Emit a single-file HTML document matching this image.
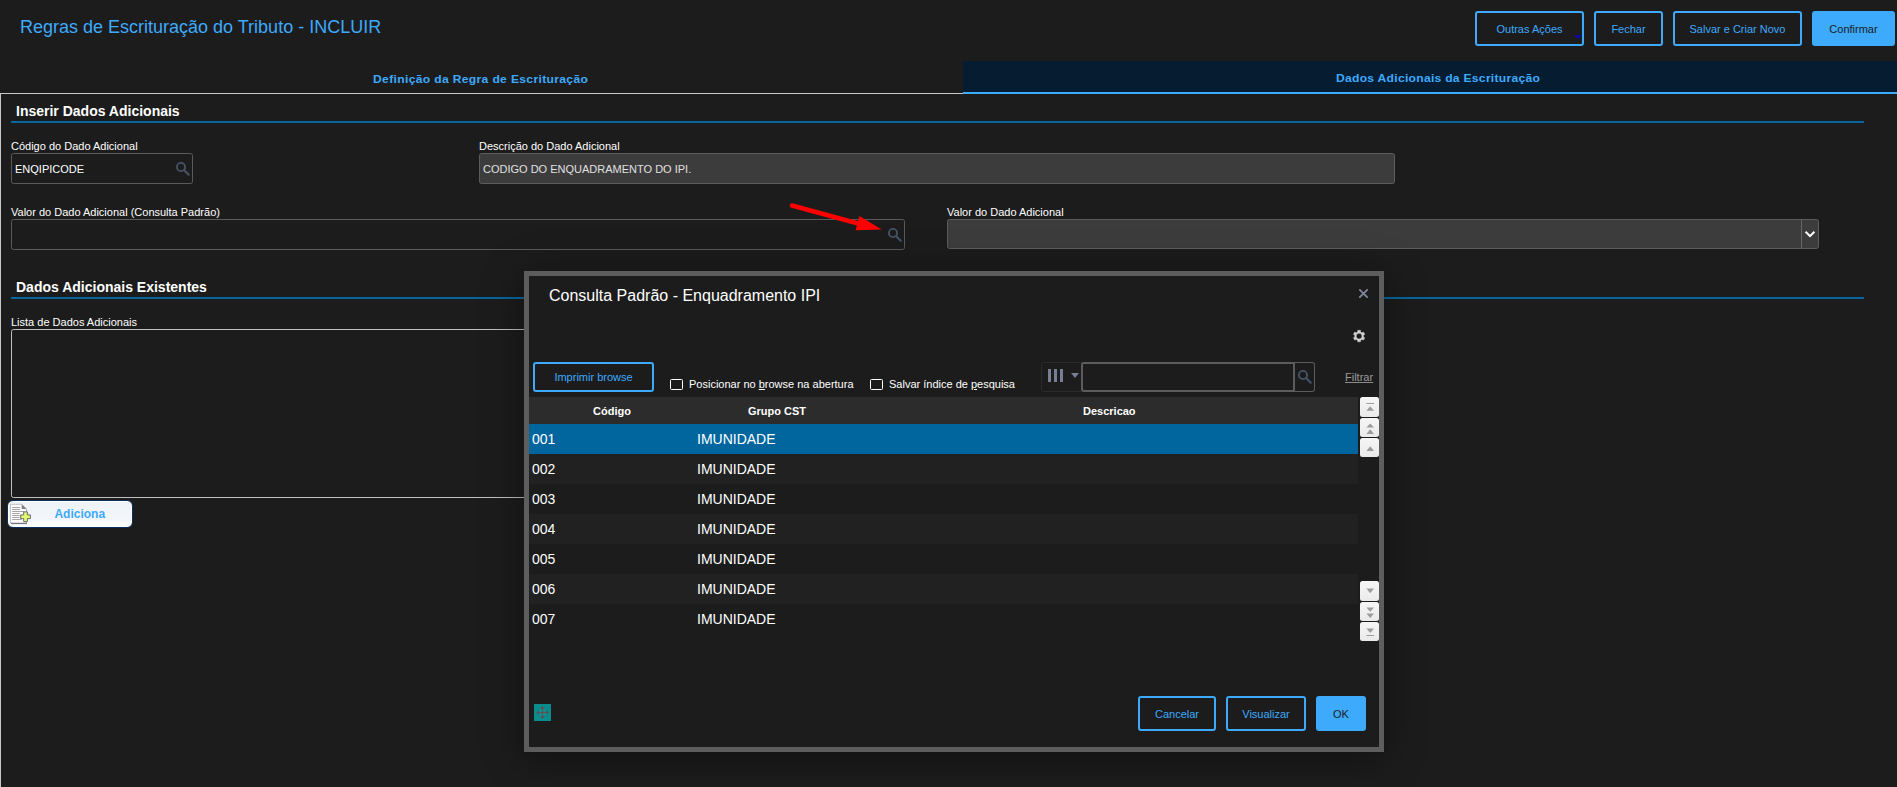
<!DOCTYPE html>
<html>
<head>
<meta charset="utf-8">
<style>
*{box-sizing:border-box;margin:0;padding:0}
html,body{width:1897px;height:787px;overflow:hidden;background:#1c1c1c}
body{font-family:"Liberation Sans",sans-serif;color:#fff;position:relative}
.abs{position:absolute}
.t{position:absolute;white-space:nowrap;line-height:1}
.btn{position:absolute;border:2px solid #3daafc;border-radius:3px;color:#3daafc;font-size:11px;display:flex;align-items:center;justify-content:center;white-space:nowrap;background:#1c1c1c}
.btn.fill{background:#3daafc;color:#1c1c1c;border-color:#3daafc}
.lbl{position:absolute;font-size:11px;color:#fff;white-space:nowrap;line-height:13px}
.inp{position:absolute;border:1px solid #5a5a5a;border-radius:2.5px;background:#1c1c1c;font-size:11px;color:#fff;line-height:13px;white-space:nowrap}
.inp.dis{background:#3c3c3c;border-color:#5d5d5d;color:#e0e0e0}
.sec{position:absolute;font-weight:bold;font-size:14px;color:#fff;white-space:nowrap;line-height:16px}
.hr{position:absolute;height:2px;background:#04689f}
.row{position:absolute;left:529px;width:829px;height:30px;font-size:14px;color:#fff;line-height:30px}
.row span{position:absolute;top:0;white-space:nowrap}
.row .c1{left:3px}
.row .c2{left:168px}
.sb{position:absolute;left:1360px;width:19px;background:linear-gradient(#f6f6f6,#eaeaea);border-radius:2.5px}
</style>
</head>
<body>
<!-- title -->
<div class="t" id="title" style="left:20px;top:18px;font-size:18px;color:#3daafc">Regras de Escrituração do Tributo - INCLUIR</div>

<!-- top buttons -->
<div class="btn" style="left:1475px;top:11px;width:109px;height:35px">Outras Ações</div>
<div class="abs" style="left:1574px;top:35px;width:0;height:0;border-left:4px solid transparent;border-right:4px solid transparent;border-top:4px solid #0a0aa8"></div>
<div class="btn" style="left:1594px;top:11px;width:69px;height:35px">Fechar</div>
<div class="btn" style="left:1673px;top:11px;width:129px;height:35px">Salvar e Criar Novo</div>
<div class="btn fill" style="left:1812px;top:11px;width:83px;height:35px">Confirmar</div>

<!-- tabs -->
<div class="abs" style="left:0;top:93px;width:963px;height:1px;background:#c8c8c8"></div>
<div class="abs" style="left:0;top:93px;width:1px;height:694px;background:#c6c6c6"></div>
<div class="abs" style="left:963px;top:61px;width:934px;height:33px;background:#061c30;border-bottom:2px solid #3daafc"></div>
<div class="t" id="tab1" style="left:373px;top:74px;font-size:11px;font-weight:bold;color:#3daafc;letter-spacing:0.307px;transform:scaleX(1.1);transform-origin:0 0">Definição da Regra de Escrituração</div>
<div class="t" id="tab2" style="left:1336px;top:73px;font-size:11px;font-weight:bold;color:#3daafc;letter-spacing:0.254px;transform:scaleX(1.1);transform-origin:0 0">Dados Adicionais da Escrituração</div>

<!-- section 1 -->
<div class="sec" id="sec1" style="left:16px;top:103px">Inserir Dados Adicionais</div>
<div class="hr" style="left:11px;top:121px;width:1853px"></div>

<div class="lbl" style="left:11px;top:140px">Código do Dado Adicional</div>
<div class="inp" style="left:11px;top:153px;width:182px;height:31px;padding:9px 0 0 3px">ENQIPICODE</div>
<svg class="abs" style="left:172.8px;top:158.8px" width="20" height="20" viewBox="0 0 20 20"><circle cx="8" cy="8" r="4.1" fill="none" stroke="#465367" stroke-width="1.9"/><line x1="11.2" y1="11.2" x2="15.7" y2="15.7" stroke="#465367" stroke-width="2.2" stroke-linecap="round"/></svg>
<div class="lbl" style="left:479px;top:140px">Descrição do Dado Adicional</div>
<div class="inp dis" style="left:479px;top:153px;width:916px;height:31px;padding:9px 0 0 3px">CODIGO DO ENQUADRAMENTO DO IPI.</div>

<div class="lbl" style="left:11px;top:206px">Valor do Dado Adicional (Consulta Padrão)</div>
<div class="inp" style="left:11px;top:219px;width:894px;height:31px"></div>
<svg class="abs" style="left:885.2px;top:225.1px" width="20" height="20" viewBox="0 0 20 20"><circle cx="8" cy="8" r="4.1" fill="none" stroke="#465367" stroke-width="1.9"/><line x1="11.2" y1="11.2" x2="15.7" y2="15.7" stroke="#465367" stroke-width="2.2" stroke-linecap="round"/></svg>
<svg class="abs" style="left:780px;top:195px" width="120" height="50" viewBox="780 195 120 50"><line x1="792" y1="205.5" x2="860" y2="224" stroke="#fe0000" stroke-width="4.6" stroke-linecap="round"/><polygon points="859.4,216 881.8,229.6 855.6,230.3" fill="#fe0000"/></svg>
<div class="lbl" style="left:947px;top:206px">Valor do Dado Adicional</div>
<div class="inp dis" style="left:947px;top:219px;width:872px;height:30px"></div>
<div class="abs" style="left:1801px;top:220px;width:1px;height:28px;background:#666"></div>
<svg class="abs" style="left:1802px;top:226px" width="16" height="16" viewBox="1802 226 16 16"><polyline points="1805.6,231.8 1810,236.2 1814.4,231.8" fill="none" stroke="#fff" stroke-width="2"/></svg>

<!-- section 2 -->
<div class="sec" id="sec2" style="left:16px;top:279px">Dados Adicionais Existentes</div>
<div class="hr" style="left:11px;top:297px;width:1853px"></div>
<div class="lbl" style="left:11px;top:316px">Lista de Dados Adicionais</div>
<div class="abs" style="left:11px;top:329px;width:600px;height:169px;border:1px solid #c0c0c0;border-radius:2.5px"></div>
<div class="abs" style="left:7px;top:500px;width:126px;height:28px;background:linear-gradient(#eef3f8,#f3f6fa 70%,#fff);border:1px solid #0b2f5e;border-radius:6px;box-shadow:inset 0 0 0 1px #fff"></div>
<svg class="abs" style="left:9px;top:502px" width="24" height="24" viewBox="9 502 24 24"><g transform="translate(-0.3,0)"><path d="M11.2,523.6 h15.6 v-14" fill="none" stroke="#2c2c2c" stroke-width="1" opacity=".75"/><path d="M10.8,504.3 h11.2 l4.8,4.8 v13.8 h-16 z" fill="#fdfdfd" stroke="#9a9a9a" stroke-width=".6"/><path d="M22,504.3 l4.8,4.8 h-4.8 z" fill="#7e7e7e"/><g stroke="#a4a4a4" stroke-width="1"><line x1="12.5" y1="507.5" x2="20.5" y2="507.5"/><line x1="12.5" y1="509.5" x2="20.5" y2="509.5"/><line x1="12.5" y1="511.5" x2="24.5" y2="511.5"/><line x1="12.5" y1="513.5" x2="20" y2="513.5"/><line x1="12.5" y1="515.5" x2="20" y2="515.5"/><line x1="12.5" y1="517.5" x2="20" y2="517.5"/><line x1="12.5" y1="519.5" x2="22" y2="519.5"/></g></g><path d="M23.7,511.9 h3.7 v3 h3 v3.7 h-3 v3 h-3.7 v-3 h-3 v-3.7 h3 z" fill="#e4fa6c" stroke="#5a5c70" stroke-width=".9" stroke-linejoin="miter"/></svg>
<div class="t" id="adic" style="left:54.4px;top:508px;font-size:12px;font-weight:bold;color:#3daafc">Adiciona</div>

<!-- modal -->
<div class="abs" id="modal" style="left:524px;top:271px;width:860px;height:481px;background:#1c1c1c;border:5px solid #5d5d5d;box-shadow:0 5px 36px 2px rgba(0,0,0,.38)"></div>
<div class="t" id="mtitle" style="left:549px;top:288px;font-size:16px;color:#fff">Consulta Padrão - Enquadramento IPI</div>

<svg class="abs" style="left:1357px;top:287px" width="13" height="13" viewBox="0 0 13 13"><path d="M2.3,2.3 L10.7,10.7 M10.7,2.3 L2.3,10.7" stroke="#80869a" stroke-width="1.8" fill="none"/></svg>
<svg class="abs" style="left:1351px;top:328px" width="16" height="16" viewBox="0 0 16 16"><path d="M6.81,2.34 L9.39,2.34 L9.59,3.96 L10.94,4.74 L12.44,4.11 L13.73,6.34 L12.43,7.32 L12.43,8.88 L13.73,9.86 L12.44,12.09 L10.94,11.46 L9.59,12.24 L9.39,13.86 L6.81,13.86 L6.61,12.24 L5.26,11.46 L3.76,12.09 L2.47,9.86 L3.77,8.88 L3.77,7.32 L2.47,6.34 L3.76,4.11 L5.26,4.74 L6.61,3.96 Z M11.00,8.10 A2.9,2.9 0 1,0 5.20,8.10 A2.9,2.9 0 1,0 11.00,8.10 Z" fill="#d2d2d2" fill-rule="evenodd" stroke="#d2d2d2" stroke-width=".5" stroke-linejoin="round"/></svg>
<div class="btn" style="left:533px;top:362px;width:121px;height:30px">Imprimir browse</div>
<div class="abs" style="left:670.3px;top:378.8px;width:12.3px;height:11.5px;border:1.4px solid #fff;border-radius:1.5px"></div>
<div class="lbl" style="left:689px;top:378px">Posicionar no <u>b</u>rowse na abertura</div>
<div class="abs" style="left:870.4px;top:378.8px;width:12.3px;height:11.5px;border:1.4px solid #fff;border-radius:1.5px"></div>
<div class="lbl" style="left:889px;top:378px">Salvar índice de <u>p</u>esquisa</div>

<div class="abs" style="left:1041px;top:362px;width:41px;height:30px;border:1px solid #2b2b2b;border-radius:3px 0 0 3px"></div>
<div class="abs" style="left:1048px;top:369px;width:3px;height:13px;background:#787e94"></div>
<div class="abs" style="left:1054px;top:369px;width:3px;height:13px;background:#787e94"></div>
<div class="abs" style="left:1060px;top:369px;width:3px;height:13px;background:#787e94"></div>
<div class="abs" style="left:1071px;top:373px;width:0;height:0;border-left:4px solid transparent;border-right:4px solid transparent;border-top:5px solid #787e94"></div>
<div class="abs" style="left:1081px;top:362px;width:214px;height:30px;border:2px solid #5c5c5c;border-radius:3px 0 0 3px"></div>
<div class="abs" style="left:1294px;top:362px;width:21px;height:30px;border:1px solid #5c5c5c;border-left:none;border-radius:0 3px 3px 0"></div>
<svg class="abs" style="left:1294.7px;top:367.2px" width="20" height="20" viewBox="0 0 20 20"><circle cx="8" cy="8" r="4.1" fill="none" stroke="#465367" stroke-width="1.9"/><line x1="11.2" y1="11.2" x2="15.7" y2="15.7" stroke="#465367" stroke-width="2.2" stroke-linecap="round"/></svg>
<div class="t" id="filtrar" style="left:1345px;top:372px;font-size:11px;color:#9a9a9a;text-decoration:underline;text-decoration-color:#8c8c8c">Filtrar</div>

<!-- grid header -->
<div class="abs" style="left:529px;top:397px;width:829px;height:27px;background:#2c2c2c"></div>
<div class="t" style="left:593px;top:406px;font-size:11px;font-weight:bold">Código</div>
<div class="t" style="left:748px;top:406px;font-size:11px;font-weight:bold">Grupo CST</div>
<div class="t" style="left:1083px;top:406px;font-size:11px;font-weight:bold">Descricao</div>

<div class="row" style="top:424px;background:#01669e"><span class="c1">001</span><span class="c2">IMUNIDADE</span></div>
<div class="row" style="top:454px;background:#212121"><span class="c1">002</span><span class="c2">IMUNIDADE</span></div>
<div class="row" style="top:484px"><span class="c1">003</span><span class="c2">IMUNIDADE</span></div>
<div class="row" style="top:514px;background:#212121"><span class="c1">004</span><span class="c2">IMUNIDADE</span></div>
<div class="row" style="top:544px"><span class="c1">005</span><span class="c2">IMUNIDADE</span></div>
<div class="row" style="top:574px;background:#212121"><span class="c1">006</span><span class="c2">IMUNIDADE</span></div>
<div class="row" style="top:604px"><span class="c1">007</span><span class="c2">IMUNIDADE</span></div>

<!-- scroll buttons -->
<div class="sb" style="top:397px;height:20px"></div>
<div class="sb" style="top:418px;height:19px"></div>
<div class="sb" style="top:438px;height:19px"></div>
<div class="sb" style="top:581px;height:20px"></div>
<div class="sb" style="top:602px;height:19px"></div>
<div class="sb" style="top:622px;height:19px"></div>
<svg class="abs" style="left:1360px;top:397px" width="20" height="246" viewBox="1360 397 20 246"><line x1="1366.4" y1="403.5" x2="1374.0" y2="403.5" stroke="#9c9c9c" stroke-width="1"/><polygon points="1366.4,410.8 1374.0,410.8 1370.2,406.3" fill="#9c9c9c"/><polygon points="1366.4,427.6 1374.0,427.6 1370.2,423.5" fill="#9c9c9c"/><polygon points="1366.4,434 1374.0,434 1370.2,429.3" fill="#9c9c9c"/><polygon points="1366.4,451 1374.0,451 1370.2,446.3" fill="#9c9c9c"/><polygon points="1366.4,588.5 1374.0,588.5 1370.2,593.2" fill="#9c9c9c"/><polygon points="1366.4,607.6 1374.0,607.6 1370.2,611.8" fill="#9c9c9c"/><polygon points="1366.4,613.5 1374.0,613.5 1370.2,618" fill="#9c9c9c"/><polygon points="1366.4,628.5 1374.0,628.5 1370.2,632.9" fill="#9c9c9c"/><line x1="1366.4" y1="635.5" x2="1374.0" y2="635.5" stroke="#9c9c9c" stroke-width="1"/></svg>

<!-- bottom -->
<div class="abs" style="left:534px;top:704px;width:17px;height:17px;background:#078d8e"></div>
<svg class="abs" style="left:534px;top:704px" width="17" height="17" viewBox="0 0 17 17"><g stroke="#5c5354" stroke-width="1.1" fill="none"><line x1="8.5" y1="3" x2="8.5" y2="14"/><line x1="3" y1="8.5" x2="14" y2="8.5"/></g><g fill="#5c5354"><polygon points="8.5,2 11,5 6,5"/><polygon points="8.5,15 11,12 6,12"/><polygon points="2,8.5 5,6 5,11"/><polygon points="15,8.5 12,6 12,11"/></g><g fill="#0a9a9b"><rect x="5.6" y="5.6" width="2" height="2"/><rect x="9.4" y="5.6" width="2" height="2"/><rect x="5.6" y="9.4" width="2" height="2"/><rect x="9.4" y="9.4" width="2" height="2"/></g></svg>
<div class="btn" style="left:1138px;top:696px;width:78px;height:35px">Cancelar</div>
<div class="btn" style="left:1226px;top:696px;width:80px;height:35px">Visualizar</div>
<div class="btn fill" style="left:1316px;top:696px;width:50px;height:35px">OK</div>
</body>
</html>
